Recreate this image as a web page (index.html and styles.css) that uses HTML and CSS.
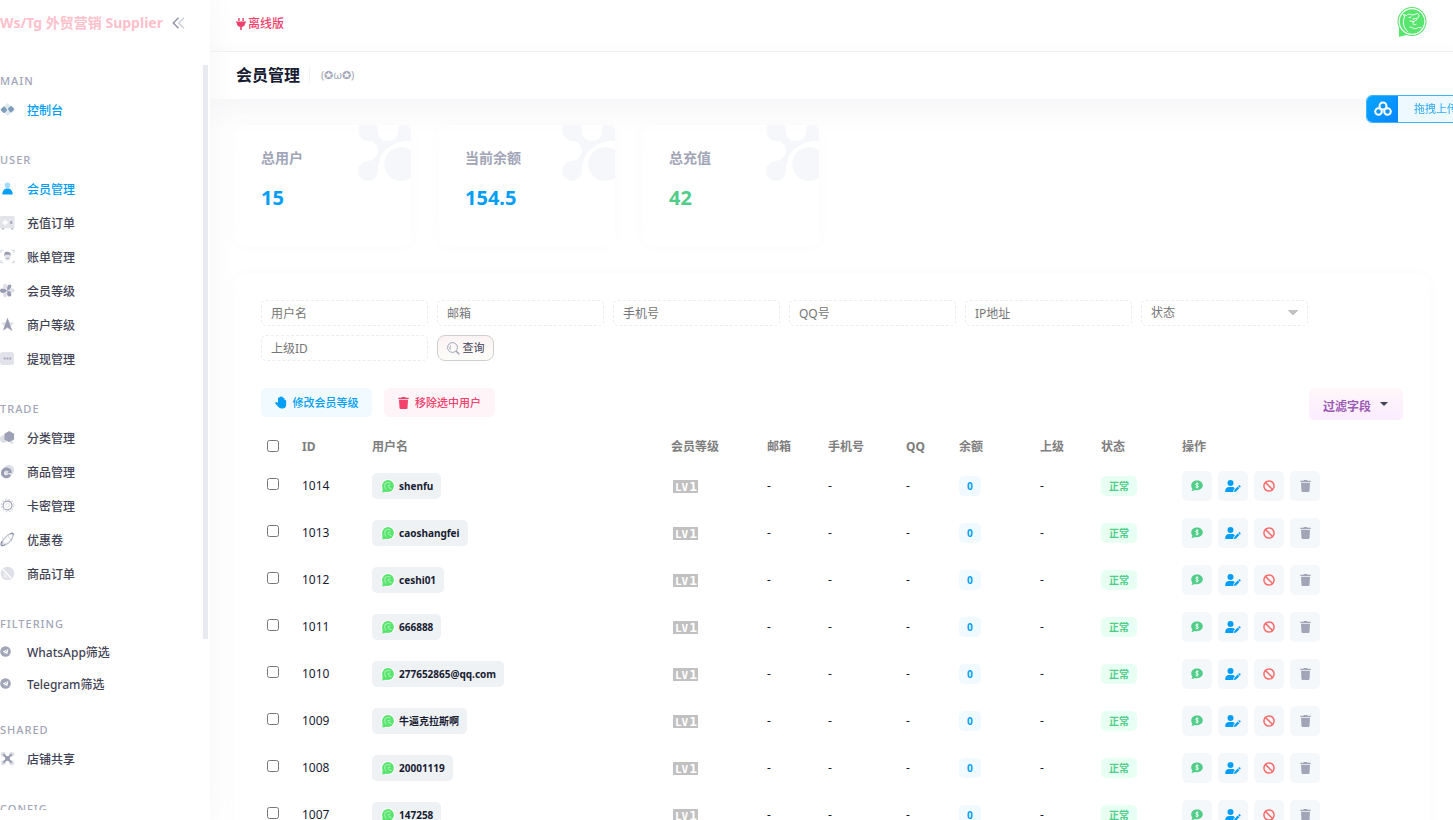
FILE: index.html
```html
<!DOCTYPE html>
<html lang="zh-CN">
<head>
<meta charset="utf-8">
<title>会员管理</title>
<link rel="stylesheet" href="styles.css">
</head>
<body>
<svg class="sprite" aria-hidden="true">
  <symbol id="i-brand" viewBox="0 0 30 30">
    <path d="M2 30V19L13 27Z" fill="#57e56d"/>
    <circle cx="15" cy="14.500" r="14.500" fill="#57e56d"/>
    <circle cx="15" cy="14.500" r="12.800" fill="none" stroke="#fff" stroke-width="1.200"/>
    <g fill="none" stroke="#fff" stroke-width="1" stroke-linecap="round" stroke-linejoin="round">
      <path d="M7.500 10C5 15 6.500 21 11 25"/>
      <path d="M7.500 10L6.500 7.500L9.500 8.500C11 6.500 12.500 7 13.500 7.500C16 8.500 18 7.500 20 6.500C22.500 6.500 22.500 10.500 20.500 11C18.500 11.500 18 12 16 12"/>
      <path d="M12 10.500L14 10M13 14L17 14.500L20 12.500M16.500 14.500C15 17.500 17 18.500 19 17.500M13 20C16 20 17 23 20.500 21C22 20 23.500 20.500 24.500 21"/>
    </g>
  </symbol>
  <symbol id="i-brand-small" viewBox="0 0 14 14">
    <circle cx="7" cy="7" r="7" fill="#fff"/>
    <path d="M1.500 13.500V9L6 12.500Z" fill="#57e56d"/>
    <circle cx="7" cy="7" r="5.900" fill="#57e56d"/>
    <path d="M4 4.500Q3 7.500 5 10.500M4 4.500Q6.500 3 9.500 3.800M6.500 7L9.500 6M7.500 7.500Q7.500 9.500 10.500 9.500" fill="none" stroke="#c4f7cc" stroke-width=".8"/>
  </symbol>
  <symbol id="i-money" viewBox="0 0 12 12">
    <path d="M6 .5C9.300.5 11.800 2.600 11.800 5.300S9.300 10.200 6 10.200c-.8 0-1.500-.1-2.200-.3C2.800 10.600 1.500 11 .3 11c.6-.6 1-1.400 1.100-2.200C.6 7.900.2 6.700.2 5.400.2 2.600 2.700.5 6 .5Z" fill="#50cd89"/>
    <path d="M7.500 3.800C7 3.200 4.800 3 4.800 4.300S7.400 5.200 7.400 6.500 5.200 7.600 4.500 6.900M6.100 2.300V8.500" fill="none" stroke="#fff" stroke-width=".9"/>
  </symbol>
  <symbol id="i-edit" viewBox="0 0 16 12">
    <circle cx="5.500" cy="3" r="3" fill="#009ef7"/>
    <path d="M.3 12V10.500C.3 8.300 2 6.900 4 6.900H7C8.200 6.900 9.200 7.400 9.900 8.200L8.700 9.500 8.200 12Z" fill="#009ef7"/>
    <path d="M9 12L9.400 9.900 12.700 6.600 14.300 8.200 11.100 11.500ZM13.200 6.100L14 5.300C14.800 4.700 16 6 15.500 6.900L14.800 7.700Z" fill="#009ef7"/>
  </symbol>
  <symbol id="i-ban" viewBox="0 0 12 12">
    <circle cx="6" cy="6" r="5.100" fill="none" stroke="#fa6b6b" stroke-width="1.500"/>
    <path d="M2.400 2.400L9.600 9.600" stroke="#fa6b6b" stroke-width="1.500"/>
  </symbol>
  <symbol id="i-trash" viewBox="0 0 11 12">
    <path d="M.3.8H3.300L4 .1H7L7.700.8H10.700V2H.3ZM1 2.800H10L9.500 11C9.400 11.600 9 12 8.400 12H2.600C2 12 1.600 11.600 1.500 11Z" fill="currentColor"/>
  </symbol>
  <symbol id="i-plane" viewBox="0 0 12 12">
    <circle cx="6" cy="6" r="5.800" fill="#a1a5b7"/>
    <path d="M2.500 6.200L9 3.200 8 9 6 7.600 5.200 8.600 4.900 7Z" fill="#fff"/>
    <path d="M5 7L8 4.300" stroke="#a1a5b7" stroke-width=".6"/>
  </symbol>
  <symbol id="i-ornament" viewBox="0 0 53 56">
    <path d="M2 0H18C19 0 20 3 20 6C20 12 24 16 30 16S40 12 40 6C40 3 41 0 43 0H49Q53 2 53 6V16C36 15 21 26 20 41V46A10 10 0 1 1 10 36C15 36 20 31 20 26S16 16 10 16C2 16-2 6 2 0Z" fill="#f5f7fa"/>
    <path d="M10 36C16 36 20 31 20 26L26 20 20 41Z" fill="#f5f7fa"/>
    <path d="M53 25A17 17 0 1 0 53 53Z" fill="#f5f7fa"/>
  </symbol>
</svg>

<div class="app">
  <aside class="sidebar">
    <div class="brand">
      <span class="brand-name">Ws/Tg 外贸营销 Supplier</span>
      <button class="collapse" type="button" aria-label="收起菜单">
        <svg width="13" height="12" viewBox="0 0 13 12" fill="none" stroke-width="1.500"><path d="M6.500.8L1.300 6 6.500 11.200" stroke="#9497ad"/><path d="M12 .8L6.800 6 12 11.200" stroke="#cfd0db"/></svg>
      </button>
    </div>
    <nav class="menu">
      <section class="group">
        <h2 class="group-title">MAIN</h2>
        <a class="item active" href="#"><svg class="icon" viewBox="0 0 16 16"><path d="M8 1L15 8 8 15 1 8Z" fill="#dfe8ee"/><rect x="1.500" y="5.500" width="5.500" height="5.500" rx="1" transform="rotate(45 4.250 8.250)" fill="#7d9cbb"/><rect x="9" y="5" width="5.500" height="5.500" rx="1" transform="rotate(45 11.750 7.750)" fill="#7d9cbb"/><path d="M6 4L10 12" stroke="#dfe8ee" stroke-width="1.500"/></svg>控制台</a>
      </section>
      <section class="group">
        <h2 class="group-title">USER</h2>
        <a class="item active" href="#"><svg class="icon" viewBox="0 0 16 16"><circle cx="8" cy="4.500" r="3" fill="#a6dcfb"/><path d="M2.500 14C2.500 10 5 8 8 8S13.500 10 13.500 14Q13.500 14.500 13 14.500H3Q2.500 14.500 2.500 14Z" fill="#009ef7"/></svg>会员管理</a>
        <a class="item" href="#"><svg class="icon" viewBox="0 0 16 16"><path d="M1 1H14.500Q15.500 1 15.500 2V13Q15.500 14 14.500 14H1Q0 14 0 13V2Q0 1 1 1Z" fill="#e3e4ea"/><path d="M2 14H4V15.500H2ZM12 14H14V15.500H12ZM11 6.500H13V9.500H11Z" fill="#a1a5b7"/><path d="M5.500 5V11M2.500 8H8.500" stroke="#fff" stroke-width="2"/></svg>充值订单</a>
        <a class="item" href="#"><svg class="icon" viewBox="0 0 16 16"><path d="M1 4V1.500H3.500M12.500 1.500H15V4M1 12V14.500H3.500M12.500 14.500H15V12" fill="none" stroke="#dcdee6" stroke-width="1.500"/><path d="M5 6H11V9Q10.500 12.500 8 12.500T5 9Z" fill="#e1e2e9"/><path d="M4.700 7.500Q4 3 7 3T11.300 4.500L11.200 7.500 10 6H6Z" fill="#989cb0"/><path d="M6.500 10H9.500" stroke="#a1a5b7"/></svg>账单管理</a>
        <a class="item" href="#"><svg class="icon" viewBox="0 0 16 16"><g fill="#dfe0e8"><ellipse cx="5.500" cy="3.800" rx="2.300" ry="3"/><ellipse cx="5.500" cy="12.200" rx="2.300" ry="3"/><ellipse cx="12.500" cy="8" rx="3" ry="2.500"/></g><path d="M8 8C4 12 0 11 0 8S4 5 8 8C7 5 8 1.500 10.500 1.500S13 6 8 8C13 9 13 14.500 10.500 14.500S7 12 8 8Z" fill="#989cb3"/></svg>会员等级</a>
        <a class="item" href="#"><svg class="icon" viewBox="0 0 16 16"><path d="M.8 6L6 5.500 8 1 10 5.500 15.200 6 11.500 9.500 13 15 8 12 3 15 4.500 9.500Z" fill="#dddfe7"/><path d="M8 .8L13 14.800 8 11 3.500 14Z" fill="#989cb3"/></svg>商户等级</a>
        <a class="item" href="#"><svg class="icon" viewBox="0 0 16 16"><rect y="1" width="15" height="14" rx="3" fill="#e2e3ea"/><path d="M4 7H6V9H4ZM7 7H9V9H7ZM10 7H12V9H10Z" fill="#a1a5b7"/></svg>提现管理</a>
      </section>
      <section class="group">
        <h2 class="group-title">TRADE</h2>
        <a class="item" href="#"><svg class="icon" viewBox="0 0 16 16"><circle cx="4" cy="9.500" r="4" fill="#dddfe7"/><circle cx="12.500" cy="13.500" r="1.500" fill="#dddfe7"/><path d="M9.800 1L15 4V10L9.800 13 4.700 10V4Z" fill="#9da1b5"/></svg>分类管理</a>
        <a class="item" href="#"><svg class="icon" viewBox="0 0 16 16"><circle cx="9.500" cy="6.500" r="5.700" fill="#dddfe7"/><path d="M10.500 7.500A4.200 4.200 0 1 0 10.500 11.500" fill="none" stroke="#989cb3" stroke-width="3.200"/><path d="M8 9.500L12.500 9.500 12 5.500Z" fill="#989cb3"/></svg>商品管理</a>
        <a class="item" href="#"><svg class="icon" viewBox="0 0 16 16" fill="none"><circle cx="8" cy="8" r="6.500" stroke="#dfe0e8" stroke-width="1.800" stroke-dasharray="2 1.400"/><circle cx="8" cy="8" r="4.700" stroke="#a1a5b7" stroke-width="1.200"/><circle cx="8" cy="8" r="2" stroke="#e3e4ea"/></svg>卡密管理</a>
        <a class="item" href="#"><svg class="icon" viewBox="0 0 16 16" fill="none"><path d="M3 5V12H9M12 10L14 4V2L8 3Z" stroke="#d9dbe4"/><ellipse cx="8" cy="8" rx="8" ry="3.200" transform="rotate(-48 8 8)" stroke="#b9bccb" stroke-width="1.200"/><path d="M2 10Q0 14 2 14.500T5 13M11 2Q14.500 0 14.500 3" stroke="#888ca4" stroke-width="1.200"/></svg>优惠卷</a>
        <a class="item" href="#"><svg class="icon" viewBox="0 0 16 16"><circle cx="8" cy="8" r="7.300" fill="#dfe0e7"/><path d="M3 3.500L12 13" stroke="#fff" stroke-width="1.500"/><path d="M4 7V12L9 13Z" fill="#eff0f4"/></svg>商品订单</a>
      </section>
      <section class="group dense">
        <h2 class="group-title">FILTERING</h2>
        <a class="item" href="#"><svg class="icon small"><use href="#i-plane"/></svg>WhatsApp筛选</a>
        <a class="item" href="#"><svg class="icon small"><use href="#i-plane"/></svg>Telegram筛选</a>
      </section>
      <section class="group">
        <h2 class="group-title">SHARED</h2>
        <a class="item" href="#"><svg class="icon" viewBox="0 0 16 16"><g fill="#dfe0e8"><circle cx="3.500" cy="3.500" r="2.700"/><circle cx="12.500" cy="3.500" r="2.700"/><circle cx="3.500" cy="12.500" r="2.700"/><circle cx="12.500" cy="12.500" r="2.700"/></g><path d="M3.500 3.500L12.500 12.500M12.500 3.500L3.500 12.500" stroke="#989cb3" stroke-width="2"/><rect x="5.500" y="5.500" width="5" height="5" fill="#989cb3"/></svg>店铺共享</a>
      </section>
      <section class="group">
        <h2 class="group-title">CONFIG</h2>
      </section>
      <span class="scroll-thumb"></span>
    </nav>
  </aside>

  <div class="page">
    <header class="topbar">
      <span class="edition"><svg width="10" height="12" viewBox="0 0 10 12"><path d="M2.200 0H3.600V3H2.200ZM6.400 0H7.800V3H6.400ZM0 3.500H10V4.800H9.200C9.200 7.300 8 8.600 5.800 9V12H4.200V9C2 8.600.8 7.300.8 4.800H0Z" fill="#f1416c"/></svg>离线版</span>
      <button class="avatar" type="button" aria-label="账户"><svg width="30" height="30"><use href="#i-brand"/></svg></button>
    </header>
    <div class="titlebar">
      <h1>会员管理</h1>
      <span class="subtitle">(✪ω✪)</span>
    </div>

    <main class="content">
      <div class="stats">
        <article class="card stat"><h3>总用户</h3><strong>15</strong><svg class="ornament"><use href="#i-ornament"/></svg></article>
        <article class="card stat"><h3>当前余额</h3><strong>154.5</strong><svg class="ornament"><use href="#i-ornament"/></svg></article>
        <article class="card stat"><h3>总充值</h3><strong class="green">42</strong><svg class="ornament"><use href="#i-ornament"/></svg></article>
      </div>

      <div class="card panel">
        <form class="filters">
          <input class="field" type="text" placeholder="用户名" aria-label="用户名">
          <input class="field" type="text" placeholder="邮箱" aria-label="邮箱">
          <input class="field" type="text" placeholder="手机号" aria-label="手机号">
          <input class="field" type="text" placeholder="QQ号" aria-label="QQ号">
          <input class="field" type="text" placeholder="IP地址" aria-label="IP地址">
          <select class="field" aria-label="状态"><option>状态</option></select>
          <input class="field" type="text" placeholder="上级ID" aria-label="上级ID">
          <button class="search" type="button"><svg width="13" height="13" viewBox="0 0 13 13" fill="none"><circle cx="5.500" cy="5.500" r="4.900" stroke="#a1a5b7"/><path d="M3.500 3.500Q2.300 5.500 3.500 7.500" stroke="#a1a5b7"/><path d="M9 9L12.300 12.300" stroke="#a1a5b7" stroke-width="1.600"/></svg>查询</button>
        </form>

        <div class="actions">
          <button class="btn blue" type="button"><svg width="12" height="13" viewBox="0 0 12 13"><path d="M3 2Q3.800 1 4.500 2V1Q5.300-.2 6.200 1V1Q7.200 0 7.900 1.300V2Q9 1.500 9.500 2.600V4Q11 3.500 11.200 5V8.500Q11 12.500 7.500 12.500H6.500Q4.500 12.500 3.200 10.800L.3 7.500Q0 6 1.800 6L3 7Z" fill="#009ef7"/></svg>修改会员等级</button>
          <button class="btn red" type="button"><svg width="11" height="12"><use href="#i-trash"/></svg>移除选中用户</button>
          <button class="columns" type="button">过滤字段<i class="caret"></i></button>
        </div>

        <table class="members">
          <colgroup><col class="c-check"><col class="c-id"><col class="c-user"><col class="c-level"><col class="c-mail"><col class="c-phone"><col class="c-qq"><col class="c-balance"><col class="c-parent"><col class="c-status"><col></colgroup>
          <thead>
            <tr><th><input type="checkbox" aria-label="全选"></th><th>ID</th><th>用户名</th><th>会员等级</th><th>邮箱</th><th>手机号</th><th>QQ</th><th>余额</th><th>上级</th><th>状态</th><th>操作</th></tr>
          </thead>
          <tbody id="rows"></tbody>
        </table>
      </div>
    </main>
  </div>
</div>

<button class="upload" type="button">
  <span class="upload-icon"><svg width="18" height="16" viewBox="0 0 18 16" fill="none" stroke="#fff" stroke-width="2"><circle cx="9" cy="5" r="3.500"/><circle cx="4.500" cy="10.500" r="3.300"/><circle cx="13.500" cy="10.500" r="3.300"/></svg></span>
  <span class="upload-label">拖拽上传</span>
</button>
<script src="app.js"></script>
</body>
</html>
```
FILE: app.js
```javascript
const members = [
  [1014, 'shenfu'],
  [1013, 'caoshangfei'],
  [1012, 'ceshi01'],
  [1011, '666888'],
  [1010, '277652865@qq.com'],
  [1009, '牛逼克拉斯啊'],
  [1008, '20001119'],
  [1007, '147258']
];

const icon = (id, w, h) => `<svg width="${w}" height="${h}"><use href="#${id}"/></svg>`;

document.getElementById('rows').innerHTML = members.map(([id, name]) => `
  <tr>
    <td><input type="checkbox" aria-label="选择 ${id}"></td>
    <td>${id}</td>
    <td><span class="user">${icon('i-brand-small', 14, 14)}${name}</span></td>
    <td><span class="level">LV<b>1</b></span></td>
    <td>-</td><td>-</td><td>-</td>
    <td><span class="badge balance">0</span></td>
    <td>-</td>
    <td><span class="badge ok">正常</span></td>
    <td><div class="ops">
      <button type="button" aria-label="充值">${icon('i-money', 12, 12)}</button>
      <button type="button" aria-label="编辑">${icon('i-edit', 16, 12)}</button>
      <button type="button" aria-label="封禁">${icon('i-ban', 12, 12)}</button>
      <button type="button" aria-label="删除">${icon('i-trash', 11, 12)}</button>
    </div></td>
  </tr>`).join('');
```
FILE: styles.css
```css
* { box-sizing: border-box; }

body {
  margin: 0;
  overflow: hidden;
  background: #fff;
  color: #181c32;
  font: 12px/18px "Noto Sans", "Noto Sans CJK SC", sans-serif;
}

button, input, select { font: inherit; color: inherit; margin: 0; }
button { padding: 0; border: 0; background: none; cursor: pointer; }
svg { flex: none; display: block; }
.sprite { position: absolute; width: 0; height: 0; }

.app { display: flex; height: 100vh; }

/* Sidebar */
.sidebar {
  flex: none;
  width: 210px;
  display: flex;
  flex-direction: column;
  padding-bottom: 10px;
  box-shadow: 0 0 28px rgba(82, 63, 105, .05);
}
.brand { display: flex; align-items: center; gap: 9px; height: 45px; margin-bottom: 20px; }
.brand-name { color: #ffc0cb; font-size: 14px; font-weight: 700; white-space: nowrap; }
.menu { position: relative; flex: 1; min-height: 0; overflow: hidden; padding-top: 3px; }
.scroll-thumb { position: absolute; top: 0; right: 2px; width: 5px; height: 77%; background: #e8eaf1; }
.group { margin-bottom: 19px; }
.group-title {
  margin: 0;
  color: #a1a5b7;
  font-size: 11px;
  font-weight: 500;
  line-height: 26px;
  letter-spacing: 1px;
}
.item {
  display: flex;
  align-items: center;
  gap: 12px;
  height: 34px;
  color: #3f4254;
  font-weight: 500;
  text-decoration: none;
}
.item.active { color: #009ef7; }
.dense { margin-bottom: 16px; }
.dense .item { height: 32px; }
.icon { width: 15px; height: 15px; margin-bottom: 3px; }
.icon.small { width: 11px; height: 11px; margin-right: 4px; }

/* Header */
.page { flex: 1; min-width: 0; overflow: hidden; }
.topbar {
  display: flex;
  align-items: center;
  justify-content: space-between;
  height: 52px;
  padding: 0 26px 7px;
  border-bottom: 1px solid #eff2f5;
}
.edition { display: flex; align-items: center; gap: 2px; padding-top: 3px; color: #f1416c; font-weight: 500; }
.titlebar {
  display: flex;
  align-items: center;
  height: 47px;
  padding: 0 26px 2px;
  box-shadow: 0 10px 30px rgba(82, 63, 105, .06);
}
h1 { margin: 0; font-size: 16px; line-height: 24px; font-weight: 700; }
.subtitle {
  margin-left: 9px;
  padding-left: 11px;
  border-left: 1px solid #f1f3f6;
  color: #a1a5b7;
  font-size: 11px;
  line-height: 16px;
}

/* Cards */
.content { padding: 26px 24px 0 25px; }
.card { border-radius: 8px; box-shadow: 0 0 20px rgba(76, 87, 125, .02); }
.stats { display: flex; gap: 28px; }
.stat { position: relative; width: 176px; height: 121px; padding: 20px 26px; }
.stat h3 { margin: 0 0 13px; color: #a1a5b7; font-size: 14px; line-height: 26px; font-weight: 700; }
.stat strong { display: block; color: #009ef7; font-size: 20px; line-height: 28px; }
.stat .green { color: #50cd89; }
.ornament { position: absolute; top: 0; right: 0; width: 53px; height: 56px; }
.panel { margin-top: 28px; padding: 26px; }

/* Filters */
.filters { display: flex; flex-wrap: wrap; gap: 9px; }
.field {
  width: 167px;
  height: 26px;
  padding: 0 9px;
  border: 1px dashed #ebedf0;
  border-radius: 5px;
  outline: 0;
  background: #fff;
  color: #757575;
}
.field::placeholder { color: #757575; }
select.field {
  appearance: none;
  background: linear-gradient(to bottom left, #c2c2c2 50%, transparent 50%) right 14px center / 6px 6px no-repeat,
    linear-gradient(to bottom right, #c2c2c2 50%, transparent 50%) right 8px center / 6px 6px no-repeat;
}
.search {
  display: flex;
  align-items: center;
  justify-content: center;
  gap: 3px;
  width: 57px;
  height: 26px;
  border: 1px solid #cfcfcf;
  border-radius: 8px;
  background: linear-gradient(#fcf3f4, #fcfdf9);
  color: #3f4254;
  font-size: 11px;
}

/* Bulk actions */
.actions { display: flex; align-items: flex-start; gap: 12px; margin-top: 27px; }
.btn {
  display: flex;
  align-items: center;
  justify-content: center;
  gap: 6px;
  width: 111px;
  height: 29px;
  border-radius: 5px;
  font-size: 11px;
  font-weight: 500;
}
.blue { background: #f1faff; color: #009ef7; }
.red { background: #fff5f8; color: #f1416c; }
.columns {
  display: flex;
  align-items: center;
  gap: 9px;
  height: 32px;
  margin-left: auto;
  padding: 6px 15px 0 14px;
  border-radius: 5px;
  background: linear-gradient(#fff7fa, #fbecff);
  color: #9b59b6;
  font-weight: 700;
}
.caret { margin-bottom: 7px; border: 4px solid transparent; border-top-color: #3f4254; border-bottom: 0; }

/* Members table */
.members { width: 100%; margin-top: 12px; table-layout: fixed; border-collapse: collapse; }
.c-check { width: 41px; }
.c-id { width: 70px; }
.c-user { width: 299px; }
.c-level { width: 96px; }
.c-mail { width: 61px; }
.c-phone { width: 78px; }
.c-qq { width: 53px; }
.c-balance { width: 81px; }
.c-parent { width: 61px; }
.c-status { width: 81px; }
th, td { padding: 0; text-align: left; vertical-align: middle; white-space: nowrap; }
th { height: 30px; color: #7e7e7e; font-weight: 700; }
td { height: 47px; }
input[type="checkbox"] { display: block; width: 12px; height: 12px; margin: 0 0 3px 6px; }

.user {
  display: inline-flex;
  align-items: center;
  gap: 4px;
  height: 26px;
  padding: 0 8px 0 9px;
  border-radius: 5px;
  background: #eff2f5;
  font-size: 10px;
  font-weight: 700;
  vertical-align: middle;
}
.level {
  display: inline-flex;
  align-items: flex-end;
  margin-left: 2px;
  background: #c1c1c1;
  color: #fff;
  font: 700 11px/11px "DejaVu Sans Mono", monospace;
  vertical-align: middle;
  padding-left: 2px;
}
.level b { padding: 0 1px; background: #c1c1c1; font-size: 13px; line-height: 13px; }
.badge {
  display: inline-block;
  padding: 0 8px;
  border-radius: 5px;
  font-size: 10px;
  line-height: 20px;
  font-weight: 700;
  vertical-align: middle;
}
.balance { background: #f1faff; color: #009ef7; }
.ok { background: #e8fff3; color: #50cd89; }
.ops { display: flex; gap: 6px; }
.ops button {
  display: flex;
  align-items: center;
  justify-content: center;
  width: 30px;
  height: 30px;
  border-radius: 5px;
  background: #f5f8fa;
  color: #a1a5b7;
}

/* Floating upload handle */
.upload {
  position: fixed;
  top: 95px;
  right: -14px;
  display: flex;
  height: 28px;
  overflow: hidden;
  border: 1px solid #3cb4fb;
  border-radius: 6px;
  background: #eef8ff;
  color: #2ea9f5;
  font-size: 11px;
}
.upload-icon { display: flex; align-items: center; justify-content: center; width: 31px; height: 100%; background: linear-gradient(135deg, #06a7ff, #0a84ff); }
.upload-label { padding: 0 8px 0 16px; line-height: 26px; white-space: nowrap; }
```
